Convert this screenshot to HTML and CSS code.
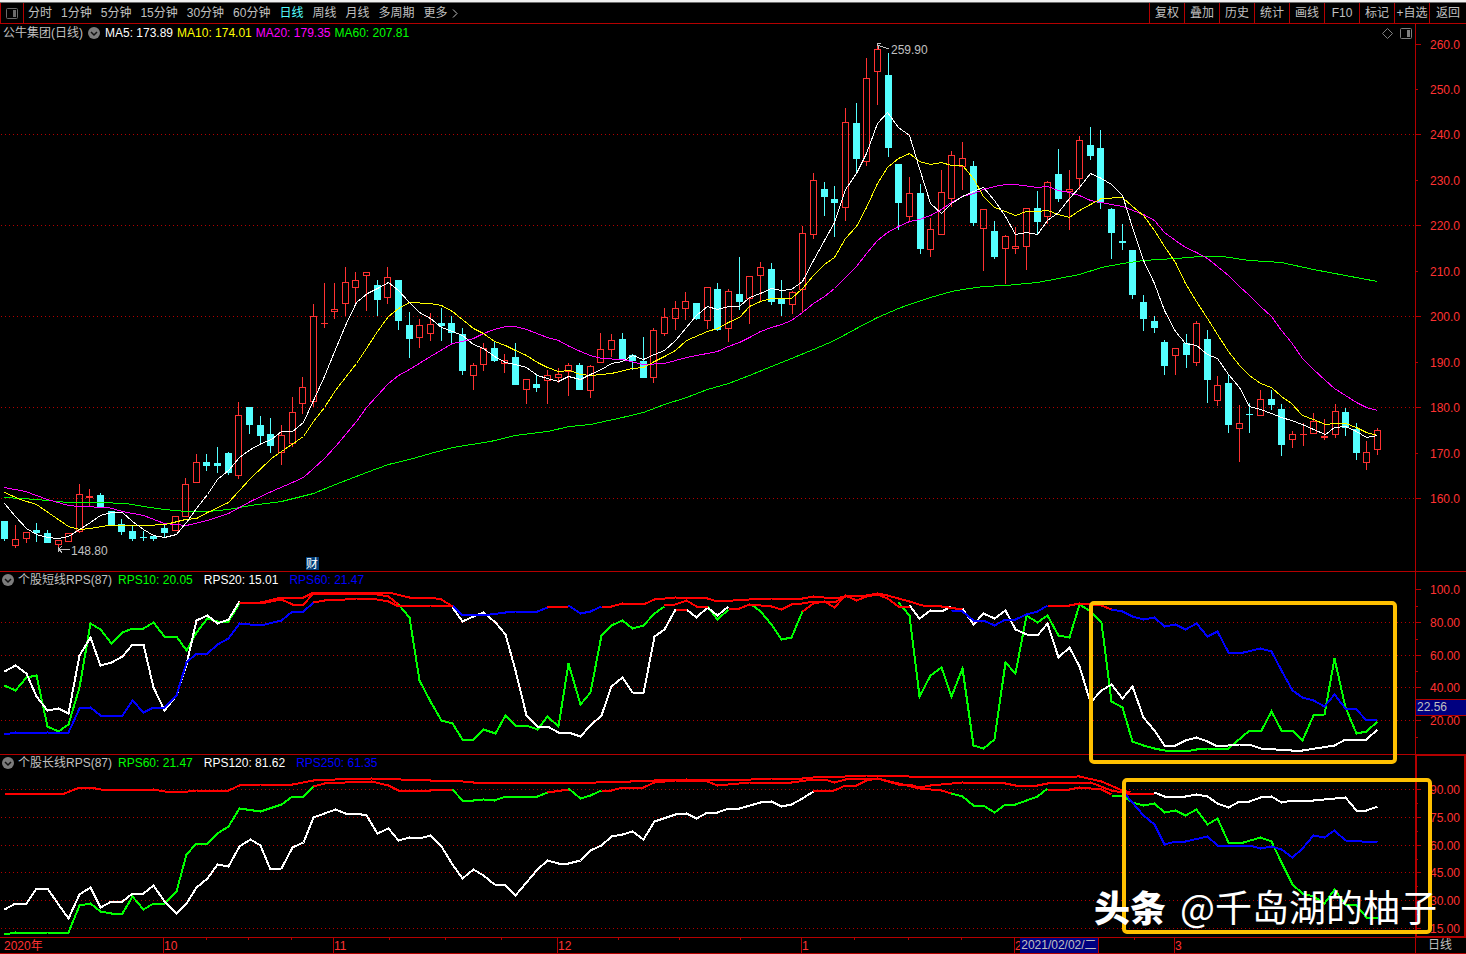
FILE: index.html
```html
<!DOCTYPE html>
<html lang="zh-CN">
<head>
<meta charset="utf-8">
<title>公牛集团(日线)</title>
<link rel="stylesheet" href="styles.css">
</head>
<body>
<div class="app">
  <div class="window-edge"></div>
  <header class="toolbar">
    <button class="layout-btn" aria-label="布局">
      <svg width="12" height="11" viewBox="0 0 12 11"><rect x="0.5" y="0.5" width="11" height="10" rx="1" fill="none" stroke="#6a6a6a"/><rect x="7" y="2" width="3" height="7" fill="#6a6a6a"/></svg>
    </button>
    <nav class="periods">
      <button>分时</button><button>1分钟</button><button>5分钟</button><button>15分钟</button><button>30分钟</button><button>60分钟</button><button class="active">日线</button><button>周线</button><button>月线</button><button>多周期</button><button class="more">更多<svg width="6" height="9" viewBox="0 0 6 9"><path d="M1 0.5L5 4.5L1 8.5" fill="none" stroke="#c0c0c0"/></svg></button>
    </nav>
    <nav class="actions">
      <button>复权</button><button>叠加</button><button>历史</button><button>统计</button><button>画线</button><button>F10</button><button>标记</button><button>+自选</button><button>返回</button>
    </nav>
  </header>

  <main class="charts">
    <section class="panel">
      <div class="plot">
        <svg class="canvas" id="price-plot"></svg>
        <div class="legend">
          <span class="name">公牛集团(日线)</span>
          <button class="fold" aria-label="指标菜单"><svg width="12" height="12" viewBox="0 0 12 12"><circle cx="6" cy="6" r="6" fill="#7c7c7c"/><path d="M3 5L6 8L9 5" fill="none" stroke="#111" stroke-width="1.5"/></svg></button>
          <span class="white">MA5: 173.89</span>
          <span class="yellow">MA10: 174.01</span>
          <span class="magenta">MA20: 179.35</span>
          <span class="green">MA60: 207.81</span>
          <span class="tools">
            <button aria-label="标记"><svg width="11" height="11" viewBox="0 0 11 11"><path d="M5.5 0.5L10.5 5.5L5.5 10.5L0.5 5.5Z" fill="none" stroke="#808080"/></svg></button>
            <button aria-label="侧栏"><svg width="12" height="11" viewBox="0 0 12 11"><rect x="0.5" y="0.5" width="11" height="10" rx="1" fill="none" stroke="#808080"/><rect x="7" y="2" width="3" height="7" fill="#808080"/></svg></button>
          </span>
        </div>
      </div>
      <div class="axis"><svg class="canvas" id="price-axis"></svg></div>
    </section>

    <section class="panel rps">
      <div class="plot">
        <svg class="canvas" id="short-plot"></svg>
        <div class="legend spaced">
          <button class="fold" aria-label="指标菜单"><svg width="12" height="12" viewBox="0 0 12 12"><circle cx="6" cy="6" r="6" fill="#7c7c7c"/><path d="M3 5L6 8L9 5" fill="none" stroke="#111" stroke-width="1.5"/></svg></button>
          <span class="name">个股短线RPS(87)</span>
          <span class="green">RPS10: 20.05</span>
          <span class="white">RPS20: 15.01</span>
          <span class="blue">RPS60: 21.47</span>
        </div>
      </div>
      <div class="axis"><svg class="canvas" id="short-axis"></svg><span class="value-tag">22.56</span></div>
    </section>

    <section class="panel rps">
      <div class="plot">
        <svg class="canvas" id="long-plot"></svg>
        <div class="legend spaced">
          <button class="fold" aria-label="指标菜单"><svg width="12" height="12" viewBox="0 0 12 12"><circle cx="6" cy="6" r="6" fill="#7c7c7c"/><path d="M3 5L6 8L9 5" fill="none" stroke="#111" stroke-width="1.5"/></svg></button>
          <span class="name">个股长线RPS(87)</span>
          <span class="green">RPS60: 21.47</span>
          <span class="white">RPS120: 81.62</span>
          <span class="blue">RPS250: 61.35</span>
        </div>
      </div>
      <div class="axis selected"><svg class="canvas" id="long-axis"></svg></div>
    </section>
  </main>

  <footer class="timeline">
    <div class="plot">
      <svg class="canvas" id="time-axis"></svg>
      <span class="date-tag">2021/02/02/二</span>
    </div>
    <div class="period-cell">日线</div>
  </footer>

  <div class="frame frame-short"></div>
  <div class="frame frame-long"></div>
  <div class="watermark"><b>头条</b><span>@千岛湖的柚子</span></div>
</div>
<script src="chart.js"></script>
</body>
</html>
```
FILE: styles.css
```css
* { box-sizing: border-box; }

body {
  margin: 0;
  background: #000;
  color: #c0c0c0;
  font: 12px/16px "Liberation Sans", "Noto Sans CJK SC", sans-serif;
}

button {
  margin: 0;
  padding: 0;
  border: 0;
  background: none;
  color: inherit;
  font: inherit;
  white-space: nowrap;
}

svg { display: block; }

.app {
  position: relative;
  display: flex;
  flex-direction: column;
  height: 100vh;
  overflow: hidden;
}

.window-edge {
  flex: none;
  height: 3px;
  background: #f0f0f0;
  border-bottom: 1px solid #6e6e6e;
}

.toolbar {
  flex: none;
  display: flex;
  height: 21px;
  border-bottom: 1px solid #b40000;
}

.layout-btn {
  display: flex;
  align-items: center;
  justify-content: center;
  width: 24px;
  border: solid #b40000;
  border-width: 0 1px;
}

.periods {
  display: flex;
  gap: 9px;
  padding-left: 4px;
}

.periods .active { color: #54ffff; }

.more {
  display: flex;
  align-items: center;
  gap: 4px;
}

.actions {
  display: flex;
  margin-left: auto;
}

.actions button {
  width: 35px;
  border-left: 1px solid #b40000;
}

.actions button:last-child { width: 37px; }

.charts {
  flex: 1;
  display: grid;
  grid-template-rows: 547fr 183fr 183fr;
  min-height: 0;
}

.panel {
  display: flex;
  min-height: 0;
}

.rps { border-top: 1px solid #b40000; }

.plot {
  flex: 1;
  position: relative;
  min-width: 0;
}

.axis {
  position: relative;
  flex: none;
  width: 51px;
  border-left: 1px solid #b40000;
}

.axis.selected {
  border-right: 1px solid #b40000;
  box-shadow: inset 0 0 0 1px #b40000;
}

.canvas {
  position: absolute;
  inset: 0;
  width: 100%;
  height: 100%;
}

.legend {
  position: relative;
  display: flex;
  align-items: center;
  gap: 4px;
  padding: 1px 3px 0;
  white-space: nowrap;
}

.legend .fold { margin: 0 1px; }

.spaced {
  gap: 11px;
  padding: 0 2px;
}

.spaced .fold { margin: 0 -7px 0 0; }
.spaced .name { margin-right: -5px; }

.tools {
  display: flex;
  gap: 7px;
  margin-left: auto;
}

.white { color: #fff; }
.yellow { color: #ff0; }
.magenta { color: #f0f; }
.green { color: #0f0; }
.blue { color: #00f; }

.value-tag,
.date-tag {
  position: absolute;
  background: #000080;
  white-space: nowrap;
}

.value-tag {
  top: 70%;
  left: 0;
  right: 0;
  padding-left: 1px;
  border: solid #b40000;
  border-width: 1px 0;
  line-height: 15px;
}

.date-tag {
  top: 0;
  left: 72.1%;
  padding: 0 1px;
  border-right: 1px solid #b40000;
  line-height: 15px;
}

.timeline {
  flex: none;
  display: flex;
  height: 17px;
  border: solid #b40000;
  border-width: 1px 0;
}

.period-cell {
  width: 51px;
  border-left: 1px solid #b40000;
  padding-left: 12px;
  line-height: 15px;
}

.frame {
  position: absolute;
  border: 4px solid #ffc000;
  border-radius: 5px;
}

.frame-short { left: 1089px; top: 601px; width: 308px; height: 163px; }
.frame-long { left: 1122px; top: 778px; width: 310px; height: 156px; }

.watermark {
  position: absolute;
  right: 29px;
  bottom: 24px;
  display: flex;
  gap: 14px;
  color: #fff;
  font: 37px/48px "Noto Sans CJK SC", sans-serif;
  white-space: nowrap;
}

.watermark b {
  font-size: 36px;
  font-weight: 900;
}

/* chart primitives */
.canvas text { font: 12px "Liberation Sans", "Noto Sans CJK SC", sans-serif; fill: #ff3232; }
.canvas .note { fill: #c0c0c0; }
.canvas .badge { fill: #fff; }
.canvas line, .canvas polyline, .canvas rect, .canvas path { shape-rendering: crispEdges; }
```
FILE: chart.js
```js
// All coordinates are on a 1415 x 930 sheet and are scaled to the size of each panel.
const SHEET = 1415;
const FIRST = 4.3, STEP = 10.642;
const RED = '#ff3232', CYAN = '#54ffff', RULE = '#b40000';

// kind, high, body top, body bottom, low
const CANDLES = `c 521 521 539 541|r 525 539 546 548|r 532 532 539 543|c 523 530 533 542|c 530 533 543 543|r 540 540 545 549|r 533 533 542 542|r 484 494 532 533|r 489 496 498 506|c 493 495 508 508
c 511 511 526 526|c 519 524 532 535|c 525 531 539 541|c 531 537 538 541|c 536 536 539 541|c 525 528 533 537|r 516 516 531 531|r 478 484 517 517|r 454 462 483 483|c 454 462 466 471
c 447 463 466 473|c 452 453 473 475|r 402 415 476 479|c 407 407 425 434|c 416 425 436 444|c 418 434 446 453|r 425 435 453 465|r 397 412 444 447|r 377 387 404 414|r 304 316 402 407
r 283 323 324 328|r 283 309 312 319|r 267 282 304 316|r 272 280 288 306|r 272 272 276 311|c 280 285 300 316|r 267 277 298 304|c 280 280 321 330|c 312 325 339 358|r 319 325 338 348
r 313 324 334 341|c 308 323 326 341|c 316 323 333 343|c 328 334 371 375|r 363 365 376 390|r 343 348 365 371|c 342 348 361 362|r 354 360 364 373|c 343 357 385 385|r 379 379 390 404
c 375 384 388 392|r 370 375 381 404|r 368 374 378 383|r 363 365 372 396|c 363 365 390 390|r 365 366 391 398|r 333 349 363 363|r 334 340 350 357|c 333 339 359 359|c 354 355 361 370
c 337 361 378 378|r 328 330 378 383|r 308 317 334 336|r 301 308 319 330|r 292 301 309 320|c 303 303 319 320|r 287 287 321 329|c 283 289 330 331|r 289 291 329 342|c 257 294 302 310
r 276 276 299 324|r 262 267 276 301|c 263 269 302 305|c 280 299 304 316|r 291 292 305 314|r 226 233 290 313|r 173 180 235 239|c 182 189 197 216|c 186 199 203 237|r 108 122 208 221
c 103 123 159 173|r 58 78 162 166|r 46 49 72 105|c 53 75 148 157|c 164 164 203 230|r 177 193 217 222|c 184 193 249 254|r 218 229 250 257|r 170 192 235 235|r 151 155 199 207
r 142 158 167 190|c 161 166 223 226|r 209 209 229 271|c 221 231 257 259|r 235 236 249 284|r 227 246 249 254|r 208 208 247 270|c 191 208 222 234|r 181 182 217 224|c 149 174 199 202
r 170 189 192 230|r 136 140 179 190|c 127 145 156 160|c 130 148 203 209|c 208 209 233 259|c 224 241 243 250|c 250 250 295 299|c 295 302 319 331|c 316 321 328 333|c 340 342 366 375
r 348 348 356 375|c 334 343 355 368|r 321 323 363 366|c 330 339 380 403|r 376 385 401 406|c 375 383 425 433|r 405 423 429 462|c 403 414 415 433|r 390 399 416 416|c 390 399 405 410
c 404 409 445 456|r 431 434 440 448|r 423 434 435 446|r 413 421 434 434|r 419 436 438 440|r 404 411 435 438|c 408 412 428 436|c 423 429 453 460|r 441 452 463 470|r 428 430 450 455`
  .split(/[|\n]/).map(s => s.trim().split(' ').map((v, i) => i ? +v : v));

const MA = [
  ['#00ff00', '4,497 36,499 68,502 100,502 125,503 143,506 164,509 186,511 207,511 228,509 250,505 281,501 313,493 335,484 366,472 388,464 409,459 430,453 452,447 490,441 515,435 547,431 569,426 590,424 622,417 643,412 664,404 686,397 707,389 728,383 749,375 771,366 791,358 813,349 834,340 856,328 877,317 898,308 909,304 930,297 951,291 962,289 983,286 1005,285 1037,282 1058,278 1079,274 1101,267 1122,263 1143,260 1175,258 1200,256 1222,256 1249,260 1281,262 1313,269 1345,275 1377,281'],
  ['#ff00ff', '4,487 25,491 36,495 47,499 68,505 79,506 108,507 122,511 143,515 164,523 186,525 207,520 228,513 239,507 250,501 271,491 292,482 303,477 313,468 324,458 335,446 356,421 366,407 377,395 388,383 398,375 409,369 430,356 452,343 462,341 473,338 483,333 494,329 505,326 515,326 526,329 547,337 558,340 569,346 580,351 590,355 601,358 622,359 643,364 664,363 686,357 717,351 728,346 739,342 749,337 760,331 771,327 781,324 791,320 802,312 813,303 824,296 834,288 845,277 856,266 866,253 877,240 887,232 898,226 909,221 919,219 930,215 941,209 951,202 962,196 973,193 983,189 994,186 1005,184 1015,184 1037,187 1047,186 1058,190 1069,192 1079,195 1090,200 1111,204 1122,206 1143,214 1154,220 1164,232 1175,240 1185,247 1196,252 1207,258 1217,266 1228,275 1239,286 1249,295 1260,306 1271,316 1281,330 1291,342 1302,358 1313,369 1325,380 1334,388 1356,402 1366,407 1377,410'],
  ['#ffff00', '4,492 20,499 36,504 52,515 68,526 79,529 90,528 108,525 130,525 145,525 165,524 185,519 196,518 207,512 228,502 239,490 250,478 271,458 281,451 303,436 313,421 324,407 335,390 345,377 356,363 366,348 377,331 388,316 398,308 409,302 430,303 441,305 452,311 473,328 483,333 494,341 505,345 515,350 526,355 537,362 547,367 558,371 569,370 580,374 590,375 611,373 632,368 643,367 654,361 664,356 675,350 686,340 707,331 717,328 728,322 739,317 749,306 760,301 771,298 791,298 802,288 813,275 824,264 834,257 845,238 856,226 866,207 877,183 887,167 898,158 909,153 919,161 930,164 941,162 951,165 962,165 973,178 983,196 994,207 1005,211 1015,215 1026,211 1037,211 1047,210 1058,214 1069,217 1079,210 1090,204 1101,198 1122,197 1132,206 1143,215 1154,230 1164,246 1175,262 1185,283 1196,301 1207,318 1217,334 1228,351 1239,365 1249,375 1260,383 1271,387 1281,396 1291,403 1302,415 1313,419 1325,424 1334,423 1345,423 1356,427 1366,432 1377,435'],
  ['#ffffff', '4,503 15,516 26,528 36,534 47,537 58,538 68,536 79,529 90,522 100,515 111,512 122,512 132,521 143,529 153,535 164,537 176,534 186,522 196,508 207,494 217,479 228,470 239,457 250,449 261,443 271,439 281,431 292,431 303,422 313,400 324,376 335,349 345,325 356,302 367,293 377,288 388,282 398,290 408,301 419,312 430,318 441,327 452,331 462,335 473,344 483,348 494,356 505,362 515,364 526,367 537,375 547,378 558,381 568,376 580,379 590,374 601,369 611,363 622,361 632,355 643,359 654,354 664,350 675,340 686,327 696,315 707,306 717,309 728,306 739,306 749,297 760,293 771,288 781,290 791,289 802,281 813,260 824,240 834,222 845,189 856,173 866,153 877,123 887,112 898,127 909,135 919,168 930,203 941,213 951,203 962,196 973,191 983,187 994,200 1005,216 1015,234 1026,232 1037,234 1047,220 1058,212 1069,198 1079,187 1090,173 1101,178 1111,184 1122,195 1132,227 1143,260 1154,283 1164,310 1175,331 1185,343 1196,345 1207,354 1217,358 1228,374 1239,387 1249,406 1260,409 1271,413 1281,417 1291,420 1302,424 1313,429 1325,434 1334,427 1345,426 1356,431 1366,437 1377,435']
];

const G = '#00ff00', W = '#ffffff', B = '#0000ff', R = '#ff0000';

const SHORT = [
  [G, '4,685 15,690 26,677 36,675 47,726 58,731 68,724 79,687 90,623 100,629 111,643 122,632 132,628 143,628 153,622 164,636 176,636 186,650 196,632 207,618 217,621 228,621 239,603'],
  [G, '398,604 409,617 419,680 430,701 441,720 452,723 462,739 473,739 483,729 495,733 505,715 515,725 526,725 537,729 547,716 558,726 568,663 580,704 590,692 601,635 611,625 622,620 632,628 643,625 654,613 664,606'],
  [G, '707,606 717,619 728,609'],
  [G, '751,604 760,611 771,624 781,639 791,637 802,611'],
  [G, '898,602 909,615 919,696 930,675 941,667 951,696 962,668 973,745 983,748 994,739 1005,662 1015,673 1026,615 1037,622 1047,615 1058,635 1069,637 1079,604 1090,611 1101,622 1111,701 1122,707 1132,741 1143,745 1154,748 1164,750 1185,751 1196,749 1207,748 1228,748 1249,730 1261,730 1271,711 1281,730 1292,730 1302,740 1313,715 1324,714 1334,658 1345,707 1356,733 1366,731 1377,721'],
  [W, '4,671 15,665 26,673 36,696 47,710 58,708 68,713 79,655 90,637 100,665 111,662 122,656 132,644 143,644 153,687 164,710 176,695 186,664 196,620 207,615 217,623 228,619 239,601'],
  [W, '452,607 462,621 473,616 483,612 495,622 505,634 515,670 526,715 537,726 547,726 558,732 568,732 580,736 590,725 601,715 611,686 622,677 632,692 643,693 654,636 664,629 675,609'],
  [W, '686,609 696,617 707,607 717,615 728,606'],
  [W, '909,605 919,618 930,610 941,611 951,606'],
  [W, '962,608 973,624 983,613 994,618 1005,610 1015,629 1026,634 1037,635 1047,623 1058,657 1069,647 1079,666 1090,702 1101,690 1111,684 1122,698 1132,686 1143,717 1154,730 1164,745 1175,745 1185,740 1196,737 1207,741 1217,746 1239,744 1249,744 1260,748 1291,750 1302,750 1334,745 1345,739 1366,739 1377,729'],
  [B, '4,734 15,732 36,733 47,732 58,733 68,732 79,708 90,707 100,715 122,715 132,700 143,712 153,707 164,707 176,695 186,662 196,653 207,653 217,644 228,638 239,623 260,625 281,620 292,611 303,611 313,602'],
  [B, '452,605 462,615 490,614 505,612 515,611 537,611 547,607'],
  [B, '568,605 580,613 590,611 601,606'],
  [B, '951,610 962,611 973,620 983,620 994,625 1005,619 1015,619 1026,614 1037,611 1047,605'],
  [B, '1111,609 1122,611 1132,616 1143,619 1154,617 1164,626 1175,624 1185,629 1196,623 1207,636 1217,631 1228,652 1243,652 1260,648 1271,651 1281,670 1292,690 1302,697 1313,700 1324,706 1334,694 1345,708 1356,709 1366,720 1377,719'],
  [R, '239,602 260,602 281,597 303,597 313,592 388,592 409,597 430,597 441,599 452,606'],
  [R, '239,602 260,603 281,599 292,604 303,604 313,593 377,594 388,596 398,604'],
  [R, '313,602 324,600 345,599 356,598 371,598 388,601 398,606 430,605 452,605'],
  [R, '547,607 568,606'],
  [R, '601,606 611,606 622,603 643,604 654,599 675,597 707,598 717,601 749,599 771,598 802,598 813,596 834,598 845,596 866,595 877,593 887,595 898,598 909,601 922,605 941,606 962,609'],
  [R, '664,605 675,604 686,600 696,606 707,606'],
  [R, '675,609 686,609'],
  [R, '728,608 739,608 749,604 771,606 781,609 791,604 802,603 813,601 824,601 834,602 845,596'],
  [R, '802,611 813,603 824,601 834,607 845,595 856,600 866,596 877,594 887,598 898,606 909,606'],
  [R, '1047,605 1069,605 1079,603 1090,604 1101,605 1111,609']
];

const LONG = [
  [G, '4,934 15,932 36,933 47,932 68,932 79,905 90,903 100,911 111,913 122,913 132,896 143,909 153,903 164,903 176,891 186,854 196,843 207,843 217,833 228,826 239,808 260,811 281,804 292,796 303,796 313,786'],
  [G, '452,789 462,800 473,800 483,799 494,800 505,796 537,796 547,792'],
  [G, '568,788 580,798 590,795 601,790'],
  [G, '951,793 962,796 973,805 983,805 994,812 1005,804 1015,804 1037,796 1047,788'],
  [G, '1111,795 1122,795 1132,802 1143,805 1154,803 1164,812 1175,810 1185,815 1196,809 1207,824 1217,818 1228,842 1243,842 1260,837 1271,841 1281,862 1292,884 1302,893 1313,896 1324,903 1334,889 1345,904 1356,905 1366,917 1377,917'],
  [W, '4,909 15,903 26,903 36,888 47,888 58,904 68,918 79,894 90,887 100,907 111,901 122,901 132,893 143,893 153,885 164,901 176,913 186,903 196,887 207,878 217,864 228,866 239,846 250,839 260,845 270,869 281,868 292,847 303,842 313,817 335,809 345,813 356,813 366,815 377,833 388,828 398,840 409,837 419,838 430,835 441,846 452,864 462,878 473,869 483,875 494,884 505,885 515,895 526,882 537,869 547,860 558,863 568,863 580,860 590,850 601,845 611,836 622,834 632,831 643,839 654,821 675,814 686,813 696,818 707,812 717,812 728,808 739,808 760,802 771,801 781,806 791,804 802,798 813,791'],
  [W, '1154,792 1164,796 1185,796 1196,794 1207,796 1217,803 1228,807 1239,801 1249,801 1260,797 1271,796 1281,802 1292,800 1313,800 1345,797 1356,810 1366,810 1377,806'],
  [B, '1125,794 1143,815 1154,824 1164,844 1175,841 1185,841 1207,836 1217,845 1249,845 1260,848 1271,846 1281,849 1292,857 1302,848 1313,835 1324,837 1334,830 1345,840 1377,842'],
  [R, '4,793 64,793 79,787 90,787 100,789 132,790 153,789 164,791 180,792 196,790 228,790 239,785 260,784 292,784 313,780 335,779 371,778 430,780 452,780 473,782 550,782 590,783 601,781 630,781 654,780 686,779 730,780 771,778 802,778 813,777 845,776 866,775 898,775 919,777 1079,776 1101,781 1122,790 1130,792'],
  [R, '313,786 324,783 345,782 371,781 388,785 398,790 430,790 452,789'],
  [R, '547,792 568,789'],
  [R, '601,790 611,790 622,787 643,787 654,782 675,780 707,781 717,785 749,782 791,782 813,779 824,779 834,782 845,779 866,778 877,778 898,783 919,788 941,790 951,793'],
  [R, '1047,789 1069,789 1079,787 1101,789 1111,794'],
  [R, '813,791 834,790 845,785 856,785 866,780 877,778 898,784 909,784 919,787 930,785 962,782 1005,783 1015,785 1037,785 1047,783 1090,782 1111,790 1122,792 1132,794 1154,793']
];

function sheet(id, top, height, fixedWidth) {
  const svg = document.getElementById(id);
  const box = svg.getBoundingClientRect();
  const sx = fixedWidth ? 1 : box.width / SHEET;
  const sy = box.height / height;
  svg.textContent = '';
  const add = (tag, attrs, text) => {
    const el = document.createElementNS('http://www.w3.org/2000/svg', tag);
    for (const k in attrs) el.setAttribute(k, attrs[k]);
    if (text) el.textContent = text;
    svg.appendChild(el);
  };
  const X = x => x * sx;
  const Y = y => (y - top) * sy;
  return {
    X, Y,
    line: (x1, y1, x2, y2, stroke, extra) =>
      add('line', { x1: X(x1), y1: Y(y1), x2: X(x2), y2: Y(y2), stroke, ...extra }),
    poly: (pts, stroke, width) => add('polyline', {
      points: pts.split(' ').map(p => { const [a, b] = p.split(','); return X(+a + 0.5) + ',' + Y(+b + 0.5); }).join(' '),
      fill: 'none', stroke, 'stroke-width': width
    }),
    rect: (x, y, w, h, attrs) => add('rect', { x, y, width: w, height: h, ...attrs }),
    path: (d, stroke) => add('path', { d, stroke, fill: 'none' }),
    text: (x, y, s, cls) => add('text', { x: X(x), y: Y(y), class: cls || '' }, s)
  };
}

function grid(s, rows) {
  for (const y of rows) s.line(1, y + 0.5, SHEET, y + 0.5, RULE, { 'stroke-dasharray': '1 3' });
}

// Minor ticks may carry a label too.
function scale(id, top, height, major, minor) {
  const s = sheet(id, top, height, true);
  const tick = (size, [y, label]) => {
    s.line(0, y + 0.5, size, y + 0.5, RULE);
    if (label) s.text(14, y + 5, label);
  };
  major.forEach(t => tick(5, t));
  minor.forEach(t => tick(2, t));
}

function draw() {
  const price = sheet('price-plot', 24, 547);
  grid(price, [134, 225, 316, 407, 498]);
  CANDLES.forEach(([kind, high, top, bottom, low], i) => {
    const x = Math.round(price.X(FIRST + STEP * i));
    const color = kind === 'c' ? CYAN : RED;
    const y = [high, top, bottom, low].map(v => Math.round(price.Y(v)));
    const h = Math.max(1, y[2] - y[1]);
    if (y[1] > y[0]) price.rect(x, y[0], 1, y[1] - y[0], { fill: color });
    if (y[3] > y[2]) price.rect(x, y[2], 1, y[3] - y[2], { fill: color });
    if (kind === 'c' || h < 3) price.rect(x - 3, y[1], 7, h, { fill: color });
    else price.rect(x - 2.5, y[1] + 0.5, 6, h - 1, { fill: 'none', stroke: color });
  });
  MA.forEach(([color, pts]) => price.poly(pts, color, 1));

  const lx = Math.round(price.X(58)), ly = Math.round(price.Y(549));
  price.path(`M${lx} ${ly + 0.5}h12M${lx + 4} ${ly - 3}l-3 3l3 4M${lx} ${ly - 2}v5`, '#c0c0c0');
  price.text(71, 555, '148.80', 'note');
  const hx = Math.round(price.X(877)), hy = Math.round(price.Y(45));
  price.path(`M${hx} ${hy}l12 4M${hx + 4} ${hy - 2}h-4l2 6`, '#c0c0c0');
  price.text(891, 54, '259.90', 'note');
  price.rect(price.X(306), price.Y(557), 13, 13, { fill: '#003c78' });
  price.text(306, 568, '财', 'badge');

  const short = sheet('short-plot', 572, 182);
  grid(short, [622, 655, 687, 720]);
  SHORT.forEach(([color, pts]) => short.poly(pts, color, 2));

  const long = sheet('long-plot', 755, 182);
  grid(long, [789, 817, 845, 872, 900, 928]);
  LONG.forEach(([color, pts]) => long.poly(pts, color, 2));

  scale('price-axis', 24, 547,
    [[44, '260.0'], [134, '240.0'], [225, '220.0'], [316, '200.0'], [407, '180.0'], [498, '160.0']],
    [[89, '250.0'], [180, '230.0'], [271, '210.0'], [362, '190.0'], [453, '170.0']]);
  scale('short-axis', 572, 182,
    [[589, '100.0'], [622, '80.00'], [655, '60.00'], [687, '40.00'], [720, '20.00']],
    [[606], [639], [671], [737]]);
  scale('long-axis', 755, 182,
    [[789, '90.00'], [817, '75.00'], [845, '60.00'], [872, '45.00'], [900, '30.00'], [928, '15.00']],
    [[803], [831], [859], [886], [914]]);

  const time = sheet('time-axis', 938, 15);
  for (const x of [206, 248, 291, 389, 445, 501, 618, 679, 740, 854, 908, 961, 1134])
    time.line(x + 0.5, 938, x + 0.5, 940, RULE);
  for (const [x, label] of [[163, '10'], [333, '11'], [557, '12'], [801, '1'], [1014, '2'], [1174, '3']]) {
    time.line(x + 0.5, 938, x + 0.5, 953, RULE);
    time.text(x + 1, 950, label);
  }
  time.text(4, 950, '2020年');
}

draw();
window.addEventListener('resize', draw);
```
